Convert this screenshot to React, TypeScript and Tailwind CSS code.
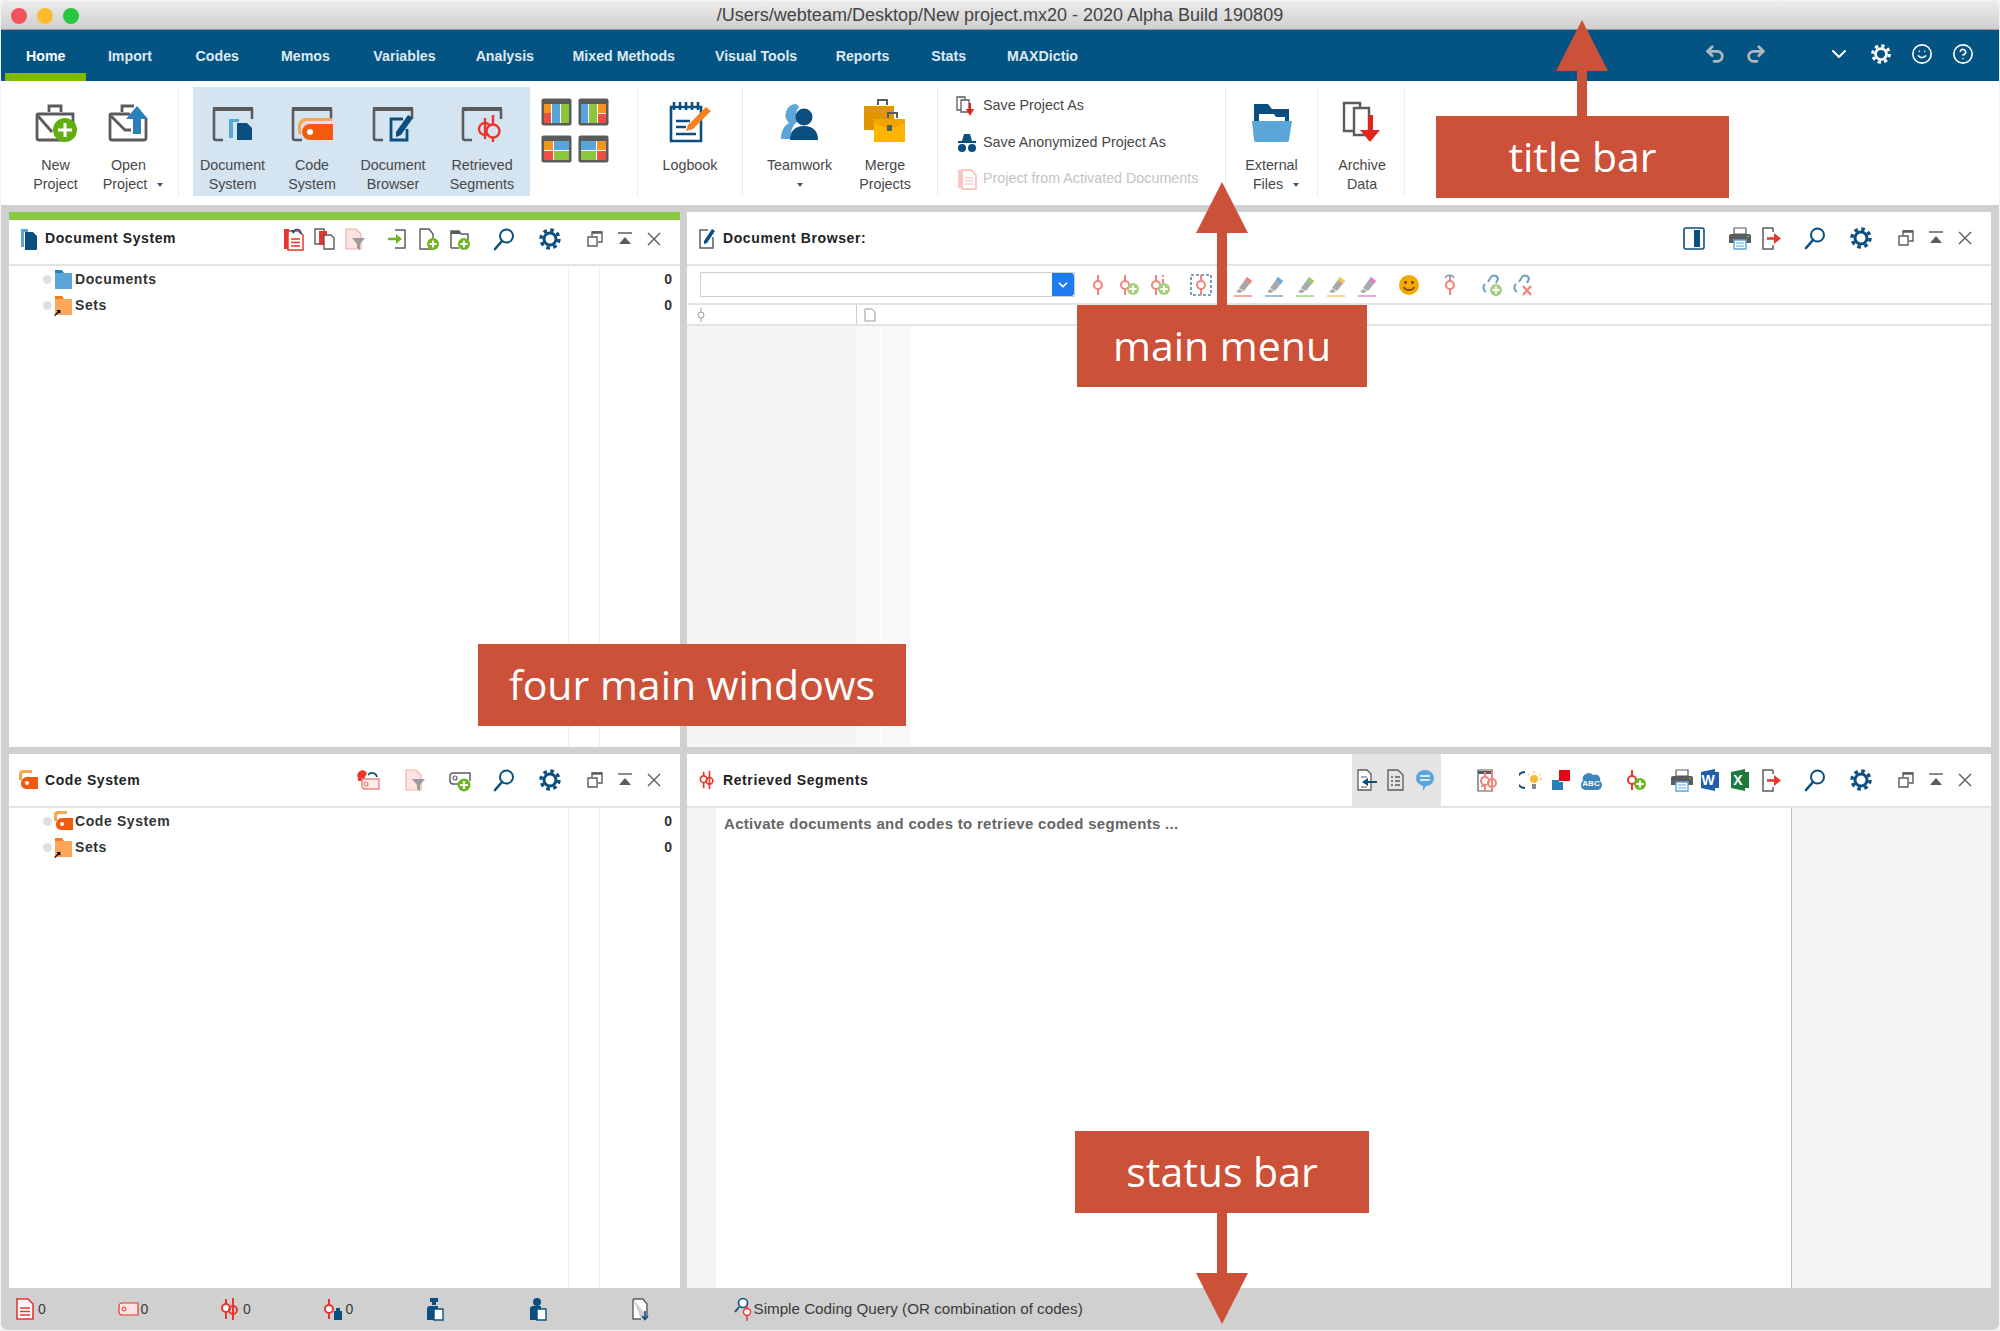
import type { ReactNode } from "react";
import { ChevronDown, CircleHelp, Redo2, Smile, Undo2 } from "lucide-react";

const GRAY = "#5a5b5d";
const BLUE = "#0b4f80";
const SKY = "#5aa6d8";
const RED = "#e8352e";
const PINK = "#f0837c";
const GREEN = "#6fb51f";

/* ---------- svg helpers ---------- */

const Svg = ({ w = 24, h = 24, vb = "0 0 24 24", children }: { w?: number; h?: number; vb?: string; children: ReactNode }) => (
  <svg width={w} height={h} viewBox={vb} fill="none" className="shrink-0">
    {children}
  </svg>
);

const PlusBadge = ({ cx = 17, cy = 17, r = 6, fill = GREEN }: { cx?: number; cy?: number; r?: number; fill?: string }) => (
  <g>
    <circle cx={cx} cy={cy} r={r} fill={fill} />
    <path d={`M${cx - r * 0.6} ${cy}h${r * 1.2}M${cx} ${cy - r * 0.6}v${r * 1.2}`} stroke="#fff" strokeWidth={r * 0.32} />
  </g>
);

/* two crossed pins, the "coded segment" mark */
const SegMark = ({ color = RED, x = 0, y = 0 }: { color?: string; x?: number; y?: number }) => (
  <g transform={`translate(${x} ${y})`} stroke={color} strokeWidth="2" fill="none">
    <path d="M8 2v20M15 1v22" />
    <circle cx="8" cy="11" r="4" fill="#fff" />
    <circle cx="15" cy="13" r="4" fill="none" />
  </g>
);

const Pin = ({ color = RED, x = 0 }: { color?: string; x?: number }) => (
  <g transform={`translate(${x} 0)`} stroke={color} strokeWidth="2" fill="none">
    <path d="M8 2v20" />
    <circle cx="8" cy="12" r="4" fill="#fff" />
  </g>
);

const Gear = ({ color = BLUE, size = 24 }: { color?: string; size?: number }) => (
  <Svg w={size} h={size}>
    <circle cx="12" cy="12" r="6" stroke={color} strokeWidth="3" />
    <circle cx="12" cy="12" r="9" stroke={color} strokeWidth="3.4" strokeDasharray="3.6 3.47" />
  </Svg>
);

const Search = () => (
  <Svg>
    <circle cx="14.5" cy="9" r="6.5" stroke={BLUE} strokeWidth="2" />
    <path d="M10 14L3 22" stroke={BLUE} strokeWidth="2.6" strokeLinecap="round" />
  </Svg>
);

const Restore = () => (
  <Svg w={18} h={18} vb="0 0 18 18">
    <path d="M6 6V2h10v10h-4" stroke={GRAY} strokeWidth="1.4" />
    <path d="M2 7h9v9H2z" stroke={GRAY} strokeWidth="1.4" />
    <path d="M6 2.500h10" stroke={GRAY} strokeWidth="2.400" />
  </Svg>
);

const Collapse = () => (
  <Svg w={16} h={16} vb="0 0 16 16">
    <path d="M1 2h14" stroke={GRAY} strokeWidth="1.400" />
    <path d="M8 6l6 7H2z" fill={GRAY} />
  </Svg>
);

const Close = () => (
  <Svg w={16} h={16} vb="0 0 16 16">
    <path d="M2 2l12 12M14 2L2 14" stroke={GRAY} strokeWidth="1.400" />
  </Svg>
);

const WindowButtons = () => (
  <div className="flex items-center gap-[13px]">
    <Restore />
    <Collapse />
    <Close />
  </div>
);

const DocLines = ({ color = RED }: { color?: string }) => (
  <Svg w={20} h={24} vb="0 0 20 24">
    <path d="M2 2h11l5 5v15H2z" stroke={color} strokeWidth="1.600" fill="#fff" />
    <path d="M5 11h10M5 14.500h10M5 18h10" stroke={color} strokeWidth="1.400" />
  </Svg>
);

const DocRestore = () => (
  <Svg>
    <path d="M2 2h5v20H2z" fill={RED} />
    <path d="M6 4h10l5 4v15H6z" stroke={RED} strokeWidth="1.500" fill="#fff" />
    <path d="M9 12h9M9 15.500h9M9 19h9" stroke={RED} strokeWidth="1.400" />
    <path d="M11 6a4 4 0 0 1 8 1" stroke={BLUE} strokeWidth="1.500" />
    <path d="M9 3l4 0-1 4z" fill={BLUE} />
  </Svg>
);

const TwoDocs = () => (
  <Svg>
    <path d="M3 2h9v15H3z" stroke={GRAY} strokeWidth="1.400" fill="#fff" />
    <path d="M7 4h8v14H7z" fill={RED} />
    <path d="M12 8h7l3 3v11H12z" stroke={GRAY} strokeWidth="1.400" fill="#fff" />
  </Svg>
);

const DocFilter = () => (
  <Svg>
    <path d="M4 2h10l5 5v15H4z" fill="#fde4e2" stroke="#f4b0ab" strokeWidth="1.200" />
    <path d="M10 11h13l-5 6v6l-3-2v-4z" fill="#9b9b9b" />
  </Svg>
);

const ImportIn = () => (
  <Svg>
    <path d="M9 3h10v18H9" stroke={GRAY} strokeWidth="1.500" />
    <path d="M2 12h10" stroke={GREEN} strokeWidth="2.400" />
    <path d="M10 7l6 5-6 5z" fill={GREEN} />
  </Svg>
);

const NewDoc = () => (
  <Svg>
    <path d="M3 2h9l4 5v15H3z" stroke={GRAY} strokeWidth="1.400" fill="#fff" />
    <PlusBadge cx={16} cy={17} r={6} />
  </Svg>
);

const NewFolder = () => (
  <Svg>
    <path d="M3 21V4h8l2 3h7v6M3 21h8" stroke={GRAY} strokeWidth="1.500" />
    <path d="M3 4h8l2 3H3z" fill={GRAY} />
    <PlusBadge cx={16} cy={17} r={6} />
  </Svg>
);

const TagUndo = () => (
  <Svg>
    <path d="M2 10a5 5 0 0 1 9-5l-4 8H2z" fill={RED} />
    <path d="M6 11h17v10H9a3 3 0 0 1-3-3z" fill="#fdecea" stroke={PINK} strokeWidth="1.400" />
    <circle cx="10" cy="16" r="2" stroke={PINK} strokeWidth="1.200" />
    <path d="M12 7a5 5 0 0 1 9 2" stroke={BLUE} strokeWidth="1.600" />
  </Svg>
);

const TagPlus = () => (
  <Svg>
    <path d="M5 5h17v8M5 5a3 3 0 0 0-3 3v5a3 3 0 0 0 3 3h6" stroke={GRAY} strokeWidth="1.400" />
    <circle cx="7" cy="10" r="2" stroke={GRAY} strokeWidth="1.200" />
    <PlusBadge cx={16} cy={17} r={6.500} />
  </Svg>
);

const PanelDoc = () => (
  <Svg w={18} h={22} vb="0 0 18 22">
    <path d="M1 1h7v3H4v15H1z" fill={SKY} />
    <path d="M5 4h8l4 4v13a1 1 0 0 1-1 1H5z" fill={BLUE} />
  </Svg>
);

const PanelCode = () => (
  <Svg w={21} h={22} vb="0 0 21 22">
    <path d="M1 11V5a4 4 0 0 1 4-4h9v3H6a2 2 0 0 0-2 2v5z" fill="#f8a552" />
    <path d="M3 14a6 6 0 0 1 6-6h11v12H8a5 5 0 0 1-5-5z" fill="#f15a0f" />
    <circle cx="9" cy="14" r="2" fill="#fff" />
  </Svg>
);

const PanelEdit = () => (
  <Svg w={18} h={24} vb="0 0 18 24">
    <path d="M10 4H2v18h13V11" stroke={GRAY} strokeWidth="1.500" />
    <path d="M6 15L14 3l3 2-8 12-3 1z" fill={BLUE} />
  </Svg>
);

const DocPanelToggle = () => (
  <Svg>
    <rect x="2" y="2" width="20" height="21" rx="2" stroke={BLUE} strokeWidth="1.600" />
    <path d="M12 4h6v17h-6z" fill={BLUE} />
  </Svg>
);

const Printer = () => (
  <Svg>
    <path d="M6 2h12v6H6z" stroke={GRAY} strokeWidth="1.200" />
    <path d="M1 10a2 2 0 0 1 2-2h18a2 2 0 0 1 2 2v7H1z" fill={GRAY} />
    <circle cx="20" cy="10.500" r="1" fill={GREEN} />
    <path d="M6 14h12v9H6z" fill="#fff" stroke={SKY} strokeWidth="1.400" />
    <path d="M8 17h8M8 20h8" stroke={SKY} strokeWidth="1.200" />
  </Svg>
);

const Export = () => (
  <Svg>
    <path d="M14 2H4v21h10v-4M14 6V2" stroke={GRAY} strokeWidth="1.500" />
    <path d="M8 12.500h8" stroke={RED} strokeWidth="2.600" />
    <path d="M15 7l7 5.500-7 5.500z" fill={RED} />
  </Svg>
);

const Marker = ({ tip, body = "#a9a9a9" }: { tip: string; body?: string }) => (
  <Svg>
    <path d="M8 16l-3 3 4 1 3-2z" fill={body} />
    <path d="M8 15L16 4l5 4-8 10z" fill={body} />
    <path d="M14 7l2-3 5 4-2 3z" fill={tip} />
    <path d="M3 23h18" stroke={tip} strokeWidth="1.400" />
  </Svg>
);

const Emoticon = () => (
  <Svg>
    <circle cx="12" cy="12" r="10" fill="#f5a800" />
    <circle cx="8.500" cy="9.500" r="1.400" fill="#5a4100" />
    <circle cx="15.500" cy="9.500" r="1.400" fill="#5a4100" />
    <path d="M6.500 14c2 4 9 4 11 0" stroke="#5a4100" strokeWidth="1.400" />
  </Svg>
);

const LinkIcon = ({ plus }: { plus?: boolean }) => (
  <Svg>
    <path d="M5 19a5 5 0 0 1-1-8M7 9l3-5a4 4 0 0 1 7 2l-2 4" stroke="#6e9fc0" strokeWidth="2" />
    {plus ? (
      <PlusBadge cx={15} cy={17} r={6} fill="#a6d07e" />
    ) : (
      <path d="M11 13l8 9M19 13l-8 9" stroke={PINK} strokeWidth="2.200" />
    )}
  </Svg>
);

const Bubble = () => (
  <Svg>
    <path d="M3 10a9 8 0 0 1 18 0c0 5-4 8-8 8l-3 5v-5a9 8 0 0 1-7-8z" fill={SKY} />
    <path d="M7 8h10M7 12h10" stroke="#fff" strokeWidth="1.600" />
  </Svg>
);

const DocBack = () => (
  <Svg>
    <path d="M3 2h9l4 4v16H3z" stroke={GRAY} strokeWidth="1.300" fill="#fff" />
    <path d="M6 9h6M6 19h6" stroke={GRAY} strokeWidth="1" />
    <path d="M12 14h10" stroke={BLUE} strokeWidth="2" />
    <path d="M13 10l-6 4 6 4z" fill={BLUE} />
  </Svg>
);

const DocList = () => (
  <Svg>
    <path d="M4 2h10l5 5v15H4z" stroke={GRAY} strokeWidth="1.300" />
    <path d="M7 9h2M11 9h5M7 13h2M11 13h5M7 17h2M11 17h5" stroke={GRAY} strokeWidth="1.600" />
  </Svg>
);

const TableSeg = () => (
  <Svg>
    <path d="M3 2h14v21H3z" stroke={GRAY} strokeWidth="1.200" />
    <path d="M3 3h14v3H3z" fill={GRAY} />
    <path d="M6 10h3M6 14h3M6 18h3" stroke={GRAY} strokeWidth="1.200" />
    <SegMark x={2} y={2} color={PINK} />
  </Svg>
);

const PinBulb = () => (
  <Svg>
    <path d="M6 4a8 8 0 0 0 0 16" stroke={BLUE} strokeWidth="2" />
    <circle cx="15" cy="11" r="4" fill="#f8b93a" />
    <path d="M13 16h4v5h-4z" fill="#8a8a8a" />
    <path d="M15 3v2M21 11h2M9 6l1 1M21 6l-1 1" stroke="#f8b93a" strokeWidth="1.400" />
  </Svg>
);

const Squares = () => (
  <Svg>
    <path d="M10 2h11v11H10z" fill="#e30613" />
    <path d="M3 12h7v2h4v8H3z" fill="#2d7fb8" />
  </Svg>
);

const CloudAbc = () => (
  <Svg>
    <path d="M6 22a5 5 0 0 1-2-9 6 6 0 0 1 10-6 5 5 0 0 1 7 6 5 5 0 0 1-3 9z" fill="#3f86b8" />
    <text x="12" y="18" textAnchor="middle" fill="#fff" fontSize="8" fontWeight="700" fontFamily="Liberation Sans, sans-serif">
      ABC
    </text>
  </Svg>
);

const PinPlus = ({ color = RED, fill = GREEN, info }: { color?: string; fill?: string; info?: boolean }) => (
  <Svg>
    <Pin color={color} x={0} />
    {info && <path d="M15 2v2M15 6v5" stroke={color} strokeWidth="2" />}
    <PlusBadge cx={16} cy={16} r={6} fill={fill} />
  </Svg>
);

const Office = ({ letter, color }: { letter: string; color: string }) => (
  <Svg>
    <path d="M3 4l14-3v22L3 20z" fill={color} />
    <path d="M12 4h9v16h-9z" fill={color} />
    <text x="10" y="17" textAnchor="middle" fill="#fff" fontSize="14" fontWeight="700" fontFamily="Liberation Sans, sans-serif">
      {letter}
    </text>
  </Svg>
);

/* ---------- ribbon icons ---------- */

const Case = ({ children }: { children?: ReactNode }) => (
  <g stroke={GRAY} strokeWidth="2.800" fill="none">
    <path d="M14 9V3h12v6" />
    <path d="M38 20v-9H3a1 1 0 0 0-1 1v23a2 2 0 0 0 2 2h26" />
    <path d="M3 13l14 16" />
    {children}
  </g>
);

const NewProjectIcon = () => (
  <Svg w={42} h={40} vb="0 0 42 40">
    <Case />
    <circle cx="30" cy="27" r="12" fill="#5fb00f" />
    <path d="M23 27h14M30 20v14" stroke="#fff" strokeWidth="3" />
  </Svg>
);

const OpenProjectIcon = () => (
  <Svg w={42} h={40} vb="0 0 42 40">
    <g stroke={GRAY} strokeWidth="2.800" fill="none">
      <path d="M14 9V3h12" />
      <path d="M22 11H3a1 1 0 0 0-1 1v23a2 2 0 0 0 2 2h32a2 2 0 0 0 2-2V16" />
      <path d="M3 13l14 14h6" />
    </g>
    <path d="M29 3l11 13h-7v15h-8V16h-7z" fill="#2b7fb9" />
  </Svg>
);

const PanelFrame = ({ children }: { children: ReactNode }) => (
  <Svg w={44} h={40} vb="0 0 44 40">
    <path d="M2 4h40v4H2z" fill={GRAY} />
    <path d="M3 6v29a2 2 0 0 0 2 2h7M41 6v10" stroke={GRAY} strokeWidth="2.600" />
    {children}
  </Svg>
);

const RibbonDocIcon = () => (
  <PanelFrame>
    <path d="M18 16h10v3h-6v16h-4z" fill={SKY} />
    <path d="M26 20h10l5 5v12H26z" fill={BLUE} />
  </PanelFrame>
);

const RibbonCodeIcon = () => (
  <PanelFrame>
    <path d="M8 30V23a8 8 0 0 1 8-8h26v3H17a6 6 0 0 0-6 6v8z" fill="#f8a552" />
    <path d="M12 29a8 8 0 0 1 8-8h23v16H20a8 8 0 0 1-8-8z" fill="#f15a0f" />
    <circle cx="20" cy="29" r="3" fill="#fff" />
  </PanelFrame>
);

const RibbonBrowserIcon = () => (
  <PanelFrame>
    <path d="M32 16H20v21h16V26" stroke={BLUE} strokeWidth="2.800" />
    <path d="M25 29l12-17 5 3-12 17-5 2z" fill={BLUE} />
  </PanelFrame>
);

const RibbonSegIcon = () => (
  <PanelFrame>
    <g stroke={RED} strokeWidth="2.400">
      <path d="M25 15v21M33 12v27" />
      <circle cx="25" cy="26" r="6" fill="none" />
      <circle cx="33" cy="28" r="6.500" fill="#d5e4f1" />
    </g>
  </PanelFrame>
);

const CELL = { o: "#f7941d", b: "#58a6d9", g: "#8cc63f", r: "#ee4e43" };

const LayoutIcon = ({ cells }: { cells: "a" | "b" | "c" | "d" }) => (
  <Svg w={31} h={28} vb="0 0 31 28">
    <rect x="0.500" y="0.500" width="30" height="27" rx="2" fill={GRAY} />
    <path d="M3 6h25v19H3z" fill="#fff" />
    {cells === "a" && (
      <g>
        <path d="M3 6h7v9H3z" fill={CELL.o} />
        <path d="M3 15h7v10H3z" fill={CELL.r} />
        <path d="M11 6h8v19h-8z" fill={CELL.b} />
        <path d="M20 6h8v19h-8z" fill={CELL.g} />
      </g>
    )}
    {cells === "b" && (
      <g>
        <path d="M3 6h7v19H3z" fill={CELL.b} />
        <path d="M11 6h8v19h-8z" fill={CELL.g} />
        <path d="M20 6h8v9h-8z" fill={CELL.o} />
        <path d="M20 16h8v9h-8z" fill={CELL.r} />
      </g>
    )}
    {cells === "c" && (
      <g>
        <path d="M3 6h9v9H3z" fill={CELL.o} />
        <path d="M3 16h9v9H3z" fill={CELL.r} />
        <path d="M13 6h15v9H13z" fill={CELL.b} />
        <path d="M13 16h15v9H13z" fill={CELL.g} />
      </g>
    )}
    {cells === "d" && (
      <g>
        <path d="M3 6h15v9H3z" fill={CELL.b} />
        <path d="M3 16h15v9H3z" fill={CELL.g} />
        <path d="M19 6h9v9h-9z" fill={CELL.o} />
        <path d="M19 16h9v9h-9z" fill={CELL.r} />
      </g>
    )}
  </Svg>
);

const LogbookIcon = () => (
  <Svg w={44} h={42} vb="0 0 44 42">
    <path d="M3 6h30v34H3z" fill="#fff" stroke={BLUE} strokeWidth="2.600" />
    <path d="M6 1v8M12 1v8M18 1v8M24 1v8M30 1v8" stroke={BLUE} strokeWidth="2.600" />
    <path d="M8 20h14M8 26h10M8 33h20" stroke={BLUE} strokeWidth="2.400" />
    <path d="M18 30l2-6 18-18 5 4-18 18z" fill="#f58220" />
  </Svg>
);

const TeamworkIcon = () => (
  <Svg w={38} h={40} vb="0 0 38 40">
    <path d="M15 1a9 9 0 0 1 3 3 11 11 0 0 0-1 14c-4 3-8 8-7 18H0c0-9 4-14 8-16a11 11 0 0 1 7-19z" fill={SKY} />
    <circle cx="23" cy="14" r="8.500" fill={BLUE} />
    <path d="M9 37c0-9 5-14 14-14s14 5 14 14z" fill={BLUE} />
  </Svg>
);

const MergeIcon = () => (
  <Svg w={44} h={44} vb="0 0 44 44">
    <path d="M15 6V1h9v5" stroke={GRAY} strokeWidth="2" />
    <path d="M1 7h30v24H1z" fill="#e09600" />
    <path d="M25 19v-5h9v5" stroke={GRAY} strokeWidth="2" />
    <path d="M11 20h31v23H11z" fill="#ffb400" />
    <path d="M11 20h31v4l-12 5h-7l-12-5z" fill="#f2a500" />
    <path d="M24 26h5v6h-5z" fill={GRAY} />
  </Svg>
);

const FolderIcon = () => (
  <Svg w={42} h={40} vb="0 0 42 40">
    <path d="M3 20V1h14l4 5h17v14z" fill={BLUE} />
    <path d="M8 11h15l2 3h9v6H8z" fill="#fff" />
    <path d="M1 18h40l-3 19a2 2 0 0 1-2 2H5a2 2 0 0 1-2-2z" fill={SKY} />
  </Svg>
);

const ArchiveIcon = () => (
  <Svg w={40} h={42} vb="0 0 40 42">
    <path d="M2 2h16v28H2z" stroke={GRAY} strokeWidth="2.400" fill="#fff" />
    <path d="M12 7h15v27H12z" stroke={GRAY} strokeWidth="2.400" fill="#fff" />
    <path d="M26 14h5v15h-5z" fill="#e2231a" />
    <path d="M18 29h20L28 41z" fill="#e2231a" />
  </Svg>
);

const SmallSave = () => (
  <Svg w={22} h={22} vb="0 0 22 22">
    <path d="M1 2h8v13H1z" stroke={GRAY} strokeWidth="1.300" fill="#fff" />
    <path d="M5 5h8v12H5z" stroke={GRAY} strokeWidth="1.300" fill="#fff" />
    <path d="M14 8v8" stroke="#e2231a" strokeWidth="2" />
    <path d="M10 14h8l-4 7z" fill="#e2231a" />
  </Svg>
);

const SmallAnon = () => (
  <Svg w={22} h={22} vb="0 0 22 22">
    <path d="M6 9l2-7h6l2 7h4v2H2V9z" fill={BLUE} />
    <circle cx="6" cy="16" r="4" fill={BLUE} />
    <circle cx="16" cy="16" r="4" fill={BLUE} />
  </Svg>
);

const SmallActivated = () => (
  <Svg w={22} h={22} vb="0 0 22 22">
    <path d="M2 2h4v18H2z" fill="#fbc9c5" />
    <path d="M6 2h9l5 5v14H6z" fill="#fff" stroke="#fbb6b0" strokeWidth="1.400" />
    <path d="M9 10h8M9 13h8M9 16h8" stroke="#fbb6b0" strokeWidth="1.200" />
  </Svg>
);

/* ---------- ribbon ---------- */

const Sep = () => <div className="w-px shrink-0 bg-[#ececec]" />;

const Drop = ({ solo }: { solo?: boolean }) => (
  <span
    className={`inline-block h-0 w-0 border-x-[3.5px] border-t-[4px] border-x-transparent border-t-[#2b5f8a] align-middle ${
      solo ? "" : "-mr-[9px] ml-[10px]"
    }`}
  />
);

const RibbonButton = ({ width, icon, lines, drop }: { width: string; icon: ReactNode; lines: string[]; drop?: boolean }) => (
  <div className={`flex shrink-0 flex-col items-center ${width}`}>
    <div className="flex h-[56px] items-end">{icon}</div>
    <div className="mt-[13px] text-center text-[14.300px] leading-[18.5px] text-[#474747]">
      <div>{lines[0]}</div>
      <div className="h-[18.5px]">
        {lines[1]}
        {drop && <Drop solo={!lines[1]} />}
      </div>
    </div>
  </div>
);

const SmallAction = ({ icon, label, off }: { icon: ReactNode; label: string; off?: boolean }) => (
  <div className={`flex items-center gap-[5px] text-[14.300px] ${off ? "text-[#c4c4c4]" : "text-[#474747]"}`}>
    {icon}
    {label}
  </div>
);

const Ribbon = () => (
  <div className="flex h-[124px] shrink-0 bg-white pb-[9px] pt-[6px]">
    <div className="flex pl-[18px]">
      <RibbonButton width="w-[73px]" icon={<NewProjectIcon />} lines={["New", "Project"]} />
      <RibbonButton width="w-[73px]" icon={<OpenProjectIcon />} lines={["Open", "Project"]} drop />
    </div>
    <div className="w-[13px]" />
    <Sep />
    <div className="w-[14px]" />
    <div className="flex w-[337px] bg-[#d5e4f1]">
      <RibbonButton width="w-[79px]" icon={<RibbonDocIcon />} lines={["Document", "System"]} />
      <RibbonButton width="w-[80px]" icon={<RibbonCodeIcon />} lines={["Code", "System"]} />
      <RibbonButton width="w-[82px]" icon={<RibbonBrowserIcon />} lines={["Document", "Browser"]} />
      <RibbonButton width="w-[96px]" icon={<RibbonSegIcon />} lines={["Retrieved", "Segments"]} />
    </div>
    <div className="ml-[11px] grid h-[65px] grid-cols-[31px_31px] gap-x-[6px] gap-y-[9px] pt-[11px]">
      <LayoutIcon cells="a" />
      <LayoutIcon cells="b" />
      <LayoutIcon cells="c" />
      <LayoutIcon cells="d" />
    </div>
    <div className="w-[28px]" />
    <Sep />
    <RibbonButton width="w-[104px]" icon={<LogbookIcon />} lines={["Logbook", ""]} />
    <Sep />
    <RibbonButton width="w-[113px]" icon={<TeamworkIcon />} lines={["Teamwork", ""]} drop />
    <RibbonButton width="w-[58px]" icon={<MergeIcon />} lines={["Merge", "Projects"]} />
    <div className="w-[23px]" />
    <Sep />
    <div className="flex w-[287px] flex-col gap-[14.5px] pl-[18px] pt-[8px]">
      <SmallAction icon={<SmallSave />} label="Save Project As" />
      <SmallAction icon={<SmallAnon />} label="Save Anonymized Project As" />
      <SmallAction icon={<SmallActivated />} label="Project from Activated Documents" off />
    </div>
    <Sep />
    <RibbonButton width="w-[91px]" icon={<FolderIcon />} lines={["External", "Files"]} drop />
    <Sep />
    <div className="pl-[2px]">
      <RibbonButton width="w-[84px]" icon={<ArchiveIcon />} lines={["Archive", "Data"]} />
    </div>
    <Sep />
  </div>
);

/* ---------- panels ---------- */

const PanelHeader = ({ icon, title, children, strip }: { icon: ReactNode; title: string; children: ReactNode; strip?: boolean }) => (
  <div className={`flex shrink-0 items-center border-b-2 border-[#e3e3e3] pl-[11px] ${strip ? "h-[46px] pb-[7px]" : "h-[54px]"}`}>
    <div className="flex w-[17px] justify-center">{icon}</div>
    <div className="ml-[8px] text-[14px] font-bold tracking-[0.6px] text-[#222]">{title}</div>
    <div className="flex-1" />
    {children}
  </div>
);

const TreeFolder = ({ color, dark }: { color: string; dark: string }) => (
  <Svg w={19} h={21} vb="0 0 19 21">
    <path d="M1 1h7l2 3h8v5H1z" fill={dark} />
    <path d="M1 4h17v16H1z" fill={color} />
  </Svg>
);

const SetFolder = () => (
  <div className="relative">
    <TreeFolder color="#fda65a" dark="#f57b14" />
    <span className="absolute -bottom-[2px] -left-[1px] text-[10px] font-bold leading-none text-black">↗</span>
  </div>
);

const TreeRow = ({ icon, label }: { icon: ReactNode; label: string }) => (
  <div className="flex h-[26px] items-center pl-[34px]">
    <div className="h-[9px] w-[9px] rounded-full bg-[#e0e0e0]" />
    <div className="ml-[2px] flex w-[19px] justify-center">{icon}</div>
    <div className="ml-[2px] text-[14px] font-semibold tracking-[0.6px] text-[#333]">{label}</div>
  </div>
);

const TreeBody = ({ rows }: { rows: { icon: ReactNode; label: string }[] }) => (
  <div className="flex min-h-0 flex-1">
    <div className="w-[560px] border-r border-[#efefef]">
      {rows.map((r) => (
        <TreeRow key={r.label} icon={r.icon} label={r.label} />
      ))}
    </div>
    <div className="w-[31px] border-r border-[#efefef]" />
    <div className="flex-1 pr-[8px]">
      {rows.map((r) => (
        <div key={r.label} className="flex h-[26px] items-center justify-end text-[14px] font-semibold text-[#333]">
          0
        </div>
      ))}
    </div>
  </div>
);

const TailIcons = () => (
  <>
    <div className="ml-[22px]">
      <Gear />
    </div>
    <div className="ml-[24px] pr-[18px]">
      <WindowButtons />
    </div>
  </>
);

const DocSystemPanel = () => (
  <section className="flex flex-col bg-white">
    <div className="h-[8px] shrink-0 bg-[#8ac943]" />
    <PanelHeader strip icon={<PanelDoc />} title="Document System">
      <div className="flex items-center gap-[6px]">
        <DocRestore />
        <TwoDocs />
        <DocFilter />
      </div>
      <div className="ml-[20px] flex items-center gap-[7px]">
        <ImportIn />
        <NewDoc />
        <NewFolder />
      </div>
      <div className="ml-[20px]">
        <Search />
      </div>
      <TailIcons />
    </PanelHeader>
    <TreeBody
      rows={[
        { icon: <TreeFolder color={SKY} dark="#2680c0" />, label: "Documents" },
        { icon: <SetFolder />, label: "Sets" },
      ]}
    />
  </section>
);

const CodeSystemPanel = () => (
  <section className="flex flex-col bg-white">
    <PanelHeader icon={<PanelCode />} title="Code System">
      <div className="flex items-center gap-[22px]">
        <TagUndo />
        <DocFilter />
        <TagPlus />
      </div>
      <div className="ml-[20px]">
        <Search />
      </div>
      <TailIcons />
    </PanelHeader>
    <TreeBody
      rows={[
        { icon: <PanelCode />, label: "Code System" },
        { icon: <SetFolder />, label: "Sets" },
      ]}
    />
  </section>
);

const BrowserToolbar = () => (
  <div className="flex h-[39px] shrink-0 items-center border-b-2 border-[#e3e3e3] pl-[13px]">
    <div className="flex h-[25px] w-[375px] border border-[#cfcfcf]">
      <div className="flex-1" />
      <div className="flex w-[22px] items-center justify-center rounded-r-[3px] bg-[#1f7cf0]">
        <ChevronDown size={14} strokeWidth={3} color="#fff" />
      </div>
    </div>
    <div className="ml-[11px] flex items-center gap-[7px]">
      <Svg>
        <Pin color={PINK} x={4} />
      </Svg>
      <PinPlus color={PINK} fill="#a6d07e" />
      <PinPlus color={PINK} fill="#a6d07e" info />
    </div>
    <div className="ml-[17px]">
      <Svg>
        <rect x="2" y="2" width="20" height="20" stroke="#5b82a5" strokeWidth="1.600" strokeDasharray="3 2" />
        <Pin color={PINK} x={4} />
      </Svg>
    </div>
    <div className="ml-[18px] flex items-center gap-[7px]">
      <Marker tip="#f2837b" />
      <Marker tip="#6ea8d6" />
      <Marker tip="#9dce6b" />
      <Marker tip="#f6c65b" />
      <Marker tip="#dc82d8" />
    </div>
    <div className="ml-[18px]">
      <Emoticon />
    </div>
    <div className="ml-[17px]">
      <Svg>
        <Pin color={PINK} x={4} />
        <path d="M7 5a5 5 0 0 1 9 0" stroke="#6e9fc0" strokeWidth="1.400" />
      </Svg>
    </div>
    <div className="ml-[19px] flex items-center gap-[7px]">
      <LinkIcon plus />
      <LinkIcon />
    </div>
  </div>
);

const DocBrowserPanel = () => (
  <section className="flex flex-col bg-white">
    <PanelHeader icon={<PanelEdit />} title="Document Browser:">
      <DocPanelToggle />
      <div className="ml-[22px] flex items-center gap-[7px]">
        <Printer />
        <Export />
      </div>
      <div className="ml-[20px]">
        <Search />
      </div>
      <TailIcons />
    </PanelHeader>
    <BrowserToolbar />
    <div className="flex h-[21px] shrink-0 items-center border-b-2 border-[#e3e3e3]">
      <div className="flex h-full w-[170px] items-center border-r border-[#cdcdcd] pl-[9px]">
        <Svg w={10} h={14} vb="0 0 10 14">
          <path d="M5 0v14" stroke="#999" />
          <circle cx="5" cy="7" r="3" fill="#fff" stroke="#999" />
        </Svg>
      </div>
      <div className="pl-[7px]">
        <Svg w={12} h={14} vb="0 0 12 14">
          <path d="M1 1h7l3 3v9H1z" stroke="#999" />
        </Svg>
      </div>
    </div>
    <div className="flex min-h-0 flex-1">
      <div className="w-[170px] bg-[#f5f5f5]" />
      <div className="ml-px w-[22px] bg-[#f8f8f8]" />
      <div className="ml-px w-[30px] bg-[#f8f8f8]" />
    </div>
  </section>
);

const RetrievedPanel = () => (
  <section className="flex flex-col bg-white">
    <PanelHeader
      icon={
        <Svg w={20} h={26}>
          <SegMark />
        </Svg>
      }
      title="Retrieved Segments"
    >
      <div className="flex h-full items-center gap-[5px] bg-[#e4e4e4] pl-[3px] pr-[4px]">
        <DocBack />
        <DocList />
        <Bubble />
      </div>
      <div className="ml-[34px]">
        <TableSeg />
      </div>
      <div className="ml-[20px] flex items-center gap-[6px]">
        <PinBulb />
        <Squares />
        <CloudAbc />
      </div>
      <div className="ml-[21px]">
        <PinPlus />
      </div>
      <div className="ml-[22px] flex items-center">
        <Printer />
        <div className="ml-[4px]">
          <Office letter="W" color="#1f5ea8" />
        </div>
        <div className="ml-[6px]">
          <Office letter="X" color="#1c7a3e" />
        </div>
        <div className="ml-[7px]">
          <Export />
        </div>
      </div>
      <div className="ml-[20px]">
        <Search />
      </div>
      <TailIcons />
    </PanelHeader>
    <div className="flex min-h-0 flex-1">
      <div className="w-[29px] bg-[#f5f5f5]" />
      <div className="flex-1 pl-[8px] pt-[7px] text-[15px] font-bold leading-[18px] tracking-[0.3px] text-[#666]">
        Activate documents and codes to retrieve coded segments ...
      </div>
      <div className="w-[200px] border-l border-[#bdbdbd] bg-[#f5f5f5]" />
    </div>
  </section>
);

/* ---------- status bar ---------- */

const StatusItem = ({ icon, count }: { icon: ReactNode; count?: string }) => (
  <div className="flex w-[102.500px] shrink-0 items-center">
    <div className="flex w-[20px] justify-center">{icon}</div>
    {count && <span className="ml-[3px]">{count}</span>}
  </div>
);

const PersonDoc = ({ bottle }: { bottle?: boolean }) => (
  <Svg w={20} h={24} vb="0 0 20 24">
    {bottle ? <path d="M5 1h8v4h-2v3H7V5H5z" fill={BLUE} /> : <circle cx="9" cy="5" r="4" fill={BLUE} />}
    <path d="M2 23V12a3 3 0 0 1 3-3h8v14z" fill={BLUE} />
    <path d="M9 12h9v11H9z" fill="#fff" stroke={BLUE} strokeWidth="1.400" />
  </Svg>
);

const StatusBar = () => (
  <div className="flex h-[42px] shrink-0 items-center pl-[14px] text-[14px] text-[#3a3a3a]">
    <StatusItem icon={<DocLines />} count="0" />
    <StatusItem
      icon={
        <Svg w={22} h={16} vb="0 0 22 16">
          <path d="M2 5a3 3 0 0 1 3-3h16v12H5a3 3 0 0 1-3-3z" fill="#fde4e2" stroke={RED} strokeWidth="1.200" />
          <circle cx="7" cy="8" r="2" stroke={RED} />
        </Svg>
      }
      count="0"
    />
    <StatusItem
      icon={
        <Svg>
          <SegMark />
        </Svg>
      }
      count="0"
    />
    <StatusItem
      icon={
        <Svg>
          <Pin />
          <path d="M15 11h4v3h2v9h-8v-9h2z" fill={BLUE} />
        </Svg>
      }
      count="0"
    />
    <StatusItem icon={<PersonDoc bottle />} />
    <StatusItem icon={<PersonDoc />} />
    <StatusItem
      icon={
        <Svg>
          <path d="M5 2h10l4 5v12M5 2v20h8" stroke={GRAY} strokeWidth="1.400" fill="#fff" />
          <path d="M17 14v8M14 19l3 3.500 3-3.500" stroke={BLUE} strokeWidth="1.600" />
        </Svg>
      }
    />
    <div className="flex items-center">
      <Svg w={20} h={24} vb="0 0 20 24">
        <circle cx="10" cy="6" r="4.500" stroke={BLUE} strokeWidth="1.600" fill="#fff" />
        <path d="M6 10l-4 5" stroke={BLUE} strokeWidth="2" />
        <path d="M14 8v16" stroke={RED} strokeWidth="1.400" />
        <circle cx="14" cy="15" r="3.500" stroke={RED} strokeWidth="1.400" fill="#fff" />
      </Svg>
      <span className="ml-[1px] text-[15.200px]">Simple Coding Query (OR combination of codes)</span>
    </div>
  </div>
);

/* ---------- annotations over the screenshot ---------- */

const Arrow = ({ className, d, h }: { className: string; d: string; h: number }) => (
  <svg width={52} height={h} viewBox={`0 0 52 ${h}`} className={`absolute ${className}`}>
    <path d={d} fill="#cb5139" />
  </svg>
);

const Callout = ({ className, label }: { className: string; label: string }) => (
  <div className={`absolute flex items-center justify-center bg-[#cb5139] font-['Open_Sans',sans-serif] text-[41px] text-white ${className}`}>{label}</div>
);

const MENU = [
  { label: "Import", nudge: "ml-[1px]" },
  { label: "Codes", nudge: "ml-[2.5px]" },
  { label: "Memos", nudge: "ml-[1px]" },
  { label: "Variables", nudge: "ml-[2.5px]" },
  { label: "Analysis", nudge: "-ml-[1px]" },
  { label: "Mixed Methods", nudge: "-ml-[2.5px]" },
  { label: "Visual Tools", nudge: "-ml-[1px]" },
  { label: "Reports", nudge: "-ml-[2.5px]" },
  { label: "Stats", nudge: "ml-[1px]" },
  { label: "MAXDictio", nudge: "" },
];

export default function App() {
  return (
    <div className="relative h-[1331px] w-[2000px] overflow-hidden bg-[#f3f3f3] p-px font-['Liberation_Sans',Arial,sans-serif]">
      <div className="flex h-full flex-col overflow-hidden rounded-[7px] bg-[#d0d0d0]">
        {/* title bar */}
        <div className="relative flex h-[29px] shrink-0 items-center justify-center border-b border-[#8d9aa3] bg-gradient-to-b from-[#ececec] to-[#cfcfcf] pt-[1px] text-[18px] text-[#444]">
          <div className="absolute left-[10px] flex gap-[10px]">
            <span className="h-[16px] w-[16px] rounded-full bg-[#f2545b]" />
            <span className="h-[16px] w-[16px] rounded-full bg-[#fdbc2e]" />
            <span className="h-[16px] w-[16px] rounded-full bg-[#27c840]" />
          </div>
          /Users/webteam/Desktop/New project.mx20 - 2020 Alpha Build 190809
        </div>

        {/* main menu */}
        <div className="flex h-[51px] shrink-0 items-stretch bg-[#035483] text-[14.200px] font-bold text-[#dfe9f0]">
          <div className="ml-[4px] flex border-b-[8px] border-[#7fba00] px-[21px] pt-[11px] text-white">
            <span className="self-center">Home</span>
          </div>
          {MENU.map((m) => (
            <div key={m.label} className={`flex border-b-[8px] border-transparent px-[20.500px] pt-[11px] ${m.nudge}`}>
              <span className="self-center">{m.label}</span>
            </div>
          ))}
          <div className="flex-1" />
          <div className="flex items-center gap-[19px] pb-[3px] text-[#aeb9c2]">
            <Undo2 size={22} strokeWidth={3} />
            <Redo2 size={22} strokeWidth={3} />
          </div>
          <div className="ml-[60px] flex items-center gap-[19px] pb-[3px] pr-[25px] text-white">
            <ChevronDown size={24} strokeWidth={2} />
            <Gear color="#fff" size={22} />
            <Smile size={22} strokeWidth={1.8} />
            <CircleHelp size={22} strokeWidth={1.8} />
          </div>
        </div>

        <Ribbon />

        {/* four main windows */}
        <div className="grid min-h-0 flex-1 grid-cols-[671px_1304px] grid-rows-[535px_534px] gap-[7px] pl-[8px] pt-[7px]">
          <DocSystemPanel />
          <DocBrowserPanel />
          <CodeSystemPanel />
          <RetrievedPanel />
        </div>

        <StatusBar />
      </div>

      <Arrow className="left-[1556px] top-[20px]" h={96} d="M26 0l26 51H31v45H21V51H0z" />
      <Callout className="left-[1436px] top-[116px] h-[82px] w-[293px]" label="title bar" />
      <Arrow className="left-[1196px] top-[182px]" h={123} d="M26 0l26 51H31v72H21V51H0z" />
      <Callout className="left-[1077px] top-[305px] h-[82px] w-[290px]" label="main menu" />
      <Callout className="left-[478px] top-[644px] h-[82px] w-[428px]" label="four main windows" />
      <Callout className="left-[1075px] top-[1131px] h-[82px] w-[294px]" label="status bar" />
      <Arrow className="left-[1196px] top-[1213px]" h={111} d="M21 0h10v60h21l-26 51L0 60h21z" />
    </div>
  );
}
